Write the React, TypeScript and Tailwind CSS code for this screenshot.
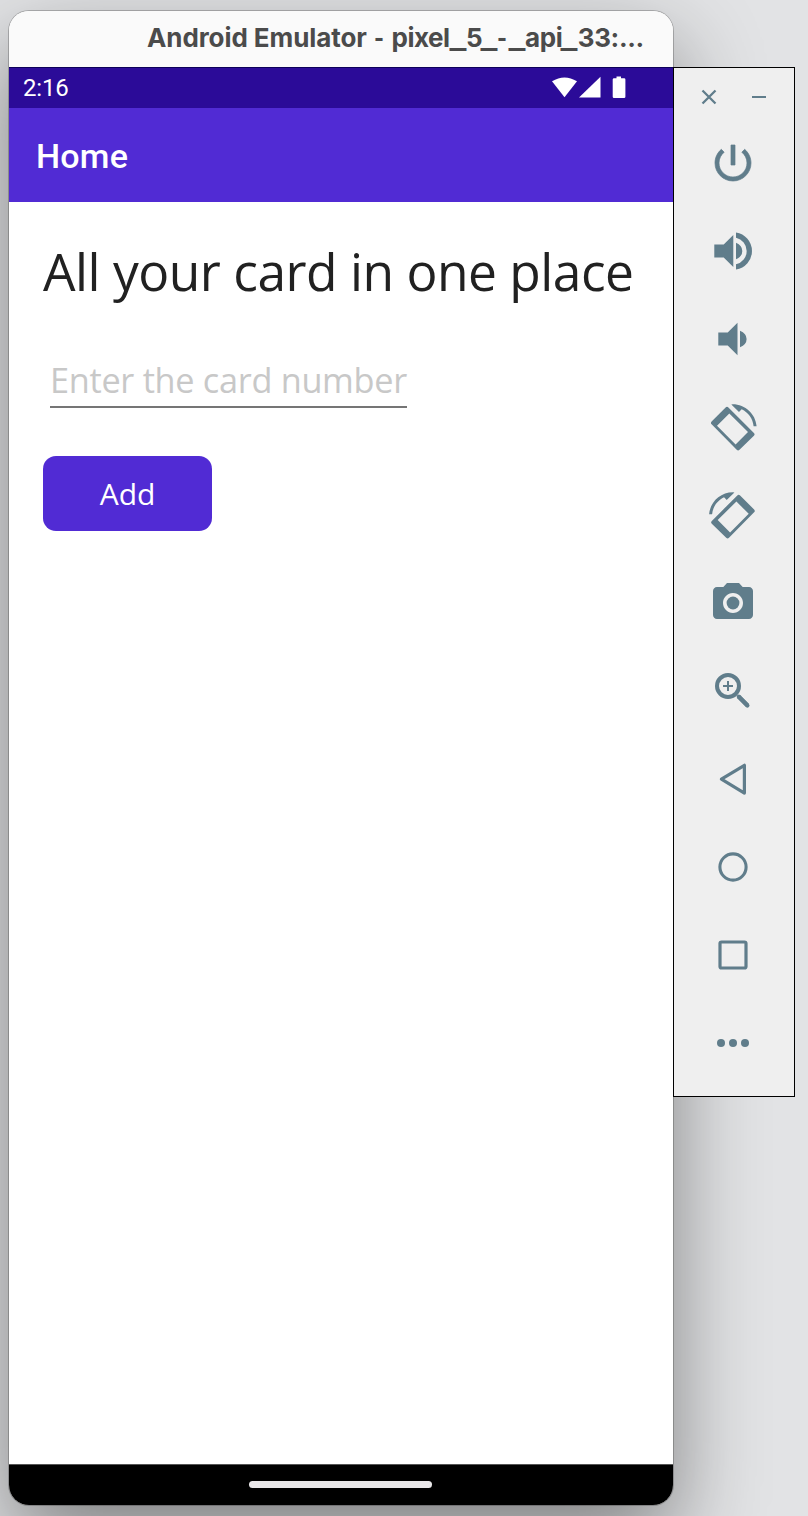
import type { ReactNode } from "react";

const devicePath =
  "M16.9 3.9 L2.9 17.9 Q1.5 19.3 2.9 20.7 L28 46.2 Q29.4 47.6 30.8 46.2 L45.2 32.1 Q46.6 30.7 45.2 29.3 L19.7 3.9 Q18.3 2.5 16.9 3.9Z M20.6 9.9 L39.3 28.4 L26.9 40.8 L8.3 22.2Z";
const arcPath =
  "M32.96 5.7 C39.5 8.8 44.2 15.1 44.9 22.7 H47.9 C46.9 10.4 36.6 .7 24 .7 L22.6 .8 L30.3 8.4Z";

const tools: { name: string; art: ReactNode }[] = [
  {
    name: "Power",
    art: (
      <path
        transform="scale(2)"
        strokeWidth=".35"
        stroke="currentColor"
        d="M13 3h-2v10h2V3zm4.83 2.17l-1.42 1.42C17.99 7.86 19 9.81 19 12c0 3.87-3.13 7-7 7s-7-3.13-7-7c0-2.19 1.01-4.14 2.58-5.42L6.17 5.17C4.23 6.82 3 9.26 3 12c0 4.97 4.03 9 9 9s9-4.03 9-9c0-2.74-1.23-5.18-3.17-6.83z"
      />
    ),
  },
  {
    name: "Volume up",
    art: (
      <path d="M5.3 17.4H14.7L24.3 8V40L14.7 30.6H5.3Z M27 15.7Q33.3 18.4 33.3 24T27 32.3Z M27 5.5A18.7 18.7 0 0 1 27 42.5V37.2A13.5 13.5 0 0 0 27 10.8Z" />
    ),
  },
  {
    name: "Volume down",
    art: <path d="M9.3 17.4H18.7L28.5 7.8V40.2L18.7 30.6H9.3Z M31 15.7Q37.6 18.4 37.6 24T31 32.3Z" />,
  },
  {
    name: "Rotate left",
    art: <path fillRule="evenodd" transform="translate(-0.3 0.6)" d={devicePath + arcPath} />,
  },
  {
    name: "Rotate right",
    art: <path fillRule="evenodd" transform="translate(48 0.6) scale(-1 1)" d={devicePath + arcPath} />,
  },
  {
    name: "Screenshot",
    art: (
      <>
        <path
          transform="scale(2)"
          fillRule="evenodd"
          d="M9 2L7.17 4H4c-1.1 0-2 .9-2 2v12c0 1.1.9 2 2 2h16c1.1 0 2-.9 2-2V6c0-1.1-.9-2-2-2h-3.17L15 2H9zm3 15c-2.76 0-5-2.24-5-5s2.24-5 5-5 5 2.24 5 5-2.24 5-5 5z"
        />
        <circle cx="24" cy="24" r="6.4" />
      </>
    ),
  },
  {
    name: "Zoom",
    art: (
      <g fill="none" stroke="currentColor">
        <circle cx="19" cy="19" r="11" strokeWidth="4" />
        <path d="M14 19H24M19 14V24" strokeWidth="2" />
        <path d="M29.6 29.6L38.6 38.6" strokeWidth="4.2" />
        <path d="M29.8 29.8L38.4 38.4" strokeWidth="4.2" strokeLinecap="round" />
      </g>
    ),
  },
  {
    name: "Back",
    art: (
      <path
        d="M12.4 24.2L35.4 10.3V38.1Z"
        fill="none"
        stroke="currentColor"
        strokeWidth="3.2"
        strokeLinejoin="round"
      />
    ),
  },
  {
    name: "Home",
    art: <circle cx="24" cy="24" r="13.1" fill="none" stroke="currentColor" strokeWidth="3.1" />,
  },
  {
    name: "Overview",
    art: (
      <rect x="11" y="11" width="26" height="26" rx="1.5" fill="none" stroke="currentColor" strokeWidth="3.2" />
    ),
  },
  {
    name: "More",
    art: (
      <>
        <circle cx="12" cy="24" r="4" />
        <circle cx="24" cy="24" r="4" />
        <circle cx="36" cy="24" r="4" />
      </>
    ),
  },
];

function Underscore() {
  return (
    <span className="inline-block w-[16.4px]">
      <span className="inline-block origin-left translate-x-[-0.6px] translate-y-px scale-x-[1.37]">_</span>
    </span>
  );
}

function Title() {
  return (
    <h1 className="pb-[2px] font-[Inter,sans-serif] text-[26px] leading-none font-bold whitespace-nowrap text-[#4b4b4b]">
      <span className="inline-block w-[227px] tracking-[-0.08px]">Android Emulator</span>
      <span className="inline-block w-[17.5px]">
        <span className="inline-block origin-left scale-x-[0.82]">-</span>
      </span>
      <span className="inline-block w-[58.2px] tracking-[-0.5px]">pixel</span>
      <Underscore />
      <span className="inline-block w-[14.8px] tracking-[-1px]">5</span>
      <Underscore />
      <span className="inline-block w-[11.3px]">
        <span className="inline-block origin-left scale-x-[0.82]">-</span>
      </span>
      <Underscore />
      <span className="inline-block w-[36.5px] tracking-[-0.4px]">api</span>
      <Underscore />
      <span className="inline-block w-[41.2px] tracking-[-0.4px]">33:</span>
      <span className="tracking-[-0.5px]">...</span>
    </h1>
  );
}

function StatusBar() {
  return (
    <div className="flex h-[41px] items-center justify-between border-t border-[#0d0059] bg-[#2b0b98] pr-[46px] pl-[14px] text-white">
      <span className="font-[Roboto,sans-serif] text-[24px] leading-none tracking-[-0.2px]">2:16</span>
      <svg className="h-[24px] w-[76px]" viewBox="0 0 76 24" fill="currentColor">
        <path d="M1 5.3Q13.5-2.5 26 5.3L13.5 21.3Z" />
        <path d="M49.5 .7V21.5H28Z" />
        <path d="M65.5 .5h4.5v1.8h3.1q1.3 0 1.3 1.3v17.1q0 1.3-1.3 1.3H63q-1.3 0-1.3-1.3V3.6q0-1.3 1.3-1.3h2.5z" />
      </svg>
    </div>
  );
}

function Phone() {
  return (
    <main className="mt-[11px] ml-[9px] flex h-[1494px] w-[664px] shrink-0 flex-col overflow-hidden rounded-[20px] bg-white shadow-[0_0_0_1px_rgba(0,0,0,0.22),0_36px_90px_rgba(0,0,0,0.44)]">
      <header className="flex h-[56px] items-center bg-[#fafafa] pl-[138px]">
        <Title />
      </header>
      <StatusBar />
      <div className="flex h-[94px] items-center bg-[#512bd4] pt-[2px] pl-[27px]">
        <h2 className="font-[Roboto,sans-serif] text-[34px] leading-none font-medium tracking-[0.2px] text-white">
          Home
        </h2>
      </div>
      <section className="flex grow flex-col items-start pt-[33px] pl-[34px] font-['Open_Sans',sans-serif]">
        <p className="h-[72px] text-[51.5px] leading-[72px] tracking-[-0.5px] whitespace-nowrap text-[#212121]">
          All your card in one place
        </p>
        <div className="mt-[45px] ml-[7px] h-[56px] w-[357px] border-b-2 border-[#757575] text-[34.3px] leading-[56px] tracking-[-0.31px] whitespace-nowrap text-[#c8c8c8]">
          Enter the card number
        </div>
        <button className="mt-[47.5px] h-[75.5px] w-[169px] rounded-[13px] bg-[#512bd4] text-[30px] text-white">
          Add
        </button>
      </section>
      <footer className="flex h-[41px] items-center justify-center border-t border-[#555] bg-black pr-[2px] pb-[2px]">
        <div className="h-[7px] w-[183px] rounded-full bg-[#e9e7e9]" />
      </footer>
    </main>
  );
}

function Toolbar() {
  return (
    <aside className="relative mt-[67px] flex h-[1030px] w-[122px] shrink-0 flex-col border border-black bg-[#efefef] text-[#607d8b]">
      <div className="flex h-[51px] items-center justify-between px-[27px] pt-[7px]">
        <svg className="size-4" viewBox="0 0 16 16" fill="none" stroke="currentColor" strokeWidth="2.3">
          <path d="M1.5 1.5L14.5 14.5M14.5 1.5L1.5 14.5" />
        </svg>
        <svg className="size-4" viewBox="0 0 16 16" fill="none" stroke="currentColor" strokeWidth="2">
          <path d="M1 8H15" />
        </svg>
      </div>
      {tools.map((tool) => (
        <button
          key={tool.name}
          aria-label={tool.name}
          className="flex h-[88px] shrink-0 items-center pl-[35px]"
        >
          <svg className="size-12" viewBox="0 0 48 48" fill="currentColor">
            {tool.art}
          </svg>
        </button>
      ))}
    </aside>
  );
}

export default function App() {
  return (
    <div className="flex h-[1516px] w-[808px] items-start overflow-hidden bg-[#e2e3e5]">
      <Phone />
      <Toolbar />
    </div>
  );
}
